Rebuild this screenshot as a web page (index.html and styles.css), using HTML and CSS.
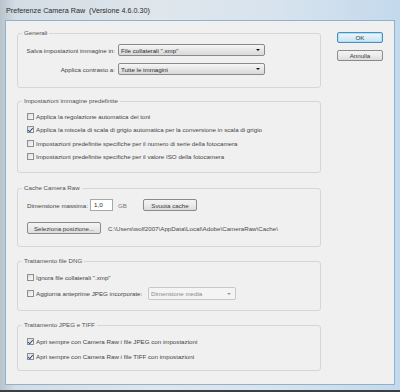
FILE: index.html
```html
<!DOCTYPE html>
<html lang="it">
<head>
    <meta charset="UTF-8">
    <title>Preferenze Camera Raw</title>
    <link rel="stylesheet" href="styles.css">
</head>
<body>
    <div class="window">
        <div class="titlebar">Preferenze Camera Raw&nbsp; (Versione 4.6.0.30)</div>
        <div class="client">
            <div class="groups">
                <fieldset class="group general">
                    <legend>Generali</legend>
                    <div class="form-grid">
                        <span class="field-label">Salva impostazioni immagine in:</span>
                        <div class="combo"><span>File collaterali ".xmp"</span><i class="arrow"></i></div>
                        <span class="field-label">Applica contrasto a:</span>
                        <div class="combo"><span>Tutte le immagini</span><i class="arrow"></i></div>
                    </div>
                </fieldset>

                <fieldset class="group defaults">
                    <legend>Impostazioni immagine predefinite</legend>
                    <div class="check-list">
                        <label class="check"><span class="box"></span>Applica la regolazione automatica dei toni</label>
                        <label class="check"><span class="box checked"></span>Applica la miscela di scala di grigio automatica per la conversione in scala di grigio</label>
                        <label class="check"><span class="box"></span>Impostazioni predefinite specifiche per il numero di serie della fotocamera</label>
                        <label class="check"><span class="box"></span>Impostazioni predefinite specifiche per il valore ISO della fotocamera</label>
                    </div>
                </fieldset>

                <fieldset class="group cache">
                    <legend>Cache Camera Raw</legend>
                    <div class="cache-row">
                        <span class="size-label">Dimensione massima:</span>
                        <div class="textbox">1,0</div>
                        <span class="unit">GB</span>
                        <button class="btn purge">Svuota cache</button>
                    </div>
                    <div class="cache-row location">
                        <button class="btn choose">Seleziona posizione...</button>
                        <span class="path">C:\Users\wolf2007\AppData\Local\Adobe\CameraRaw\Cache\</span>
                    </div>
                </fieldset>

                <fieldset class="group dng">
                    <legend>Trattamento file DNG</legend>
                    <div class="check-list">
                        <label class="check"><span class="box"></span>Ignora file collaterali ".xmp"</label>
                        <div class="preview-row">
                            <label class="check preview-label"><span class="box"></span>Aggiorna anteprime JPEG incorporate:</label>
                            <div class="combo disabled"><span>Dimensione media</span><i class="arrow"></i></div>
                        </div>
                    </div>
                </fieldset>

                <fieldset class="group jpeg">
                    <legend>Trattamento JPEG e TIFF</legend>
                    <div class="check-list">
                        <label class="check"><span class="box checked"></span>Apri sempre con Camera Raw i file JPEG con impostazioni</label>
                        <label class="check"><span class="box checked"></span>Apri sempre con Camera Raw i file TIFF con impostazioni</label>
                    </div>
                </fieldset>
            </div>

            <div class="buttons">
                <button class="btn dialog default">OK</button>
                <button class="btn dialog">Annulla</button>
            </div>
        </div>
    </div>
</body>
</html>
```

FILE: styles.css
```css
body {
    margin: 0;
    padding: 0;
    font-family: 'Liberation Sans', Arial, sans-serif;
    color: #444;
    background: #fff;
}

.window {
    width: 400px;
    height: 392px;
    box-sizing: border-box;
    background: linear-gradient(90deg, #b8c3cc 0%, #d3dde5 4%, #dfe6ec 40%, #d7e3ee 70%, #c3d9ec 100%);
    border-bottom: 2px solid #3a3f44;
    display: flex;
    flex-direction: column;
}

.titlebar {
    height: 20px;
    padding-left: 6px;
    font-size: 7.2px;
    line-height: 21px;
    color: #2a2a2a;
    flex-shrink: 0;
}

.client {
    margin: 0 5px 5px 5px;
    flex: 1;
    background: #f0f0f0;
    border: 1px solid #8eb2cc;
    padding: 8px 0 0 11px;
    display: flex;
    gap: 16px;
}

.groups {
    width: 304px;
    display: flex;
    flex-direction: column;
}

.group {
    margin: 0;
    padding: 0 12px 0 9px;
    border: 1px solid #d6d6d6;
    border-radius: 3px;
    box-sizing: border-box;
    min-width: 0;
    font-size: 6.2px;
}

.group legend {
    font-size: 6.2px;
    line-height: 8px;
    padding: 0 2px;
    margin-left: -5px;
    color: #505050;
}

.general { height: 59px; padding-top: 7px; }
.defaults { height: 76px; margin-top: 9px; padding-top: 6px; }
.cache { height: 63px; margin-top: 11px; padding-top: 7px; }
.dng { height: 54px; margin-top: 10px; padding-top: 7px; }
.jpeg { height: 50px; margin-top: 10px; padding-top: 7px; }

.form-grid {
    display: grid;
    grid-template-columns: 88px 147px;
    grid-auto-rows: 12px;
    column-gap: 3px;
    row-gap: 7px;
    align-items: center;
}

.field-label {
    justify-self: end;
    white-space: nowrap;
}

.combo {
    height: 12px;
    box-sizing: border-box;
    border: 1px solid #8a8a8a;
    border-radius: 2px;
    background: linear-gradient(#f6f6f6, #e6e6e6 50%, #d9d9d9);
    display: flex;
    align-items: center;
    padding-left: 2px;
    color: #2a2a2a;
}

.combo span {
    flex: 1;
    white-space: nowrap;
}

.combo .arrow {
    width: 0;
    height: 0;
    margin-right: 4px;
    border-left: 2px solid transparent;
    border-right: 2px solid transparent;
    border-top: 2px solid #111;
}

.combo.disabled {
    width: 88px;
    height: 13px;
    background: #f4f4f4;
    border-color: #c8c8c8;
    color: #8a8a8a;
}

.combo.disabled .arrow {
    border-top-color: #9a9a9a;
}

.check-list {
    display: flex;
    flex-direction: column;
    gap: 3.6px;
}

.dng .check-list,
.jpeg .check-list {
    gap: 5px;
}

.check {
    height: 10px;
    display: flex;
    align-items: center;
    gap: 2px;
    white-space: nowrap;
}

.box {
    width: 7px;
    height: 7px;
    box-sizing: border-box;
    border: 1px solid #8f8f8f;
    background: linear-gradient(135deg, #dcdcdc, #fbfbfb);
    flex-shrink: 0;
    position: relative;
}

.box.checked::after {
    content: '';
    position: absolute;
    left: 1px;
    top: 0;
    width: 2px;
    height: 3.5px;
    border-right: 1.3px solid #2b4f9a;
    border-bottom: 1.3px solid #2b4f9a;
    transform: rotate(40deg);
}

.preview-row {
    display: flex;
    align-items: center;
    height: 13px;
}

.preview-label {
    width: 121px;
}

.cache-row {
    display: flex;
    align-items: center;
    height: 12px;
    white-space: nowrap;
}

.cache-row.location {
    margin-top: 11px;
}

.size-label {
    width: 63px;
}

.textbox {
    width: 23px;
    height: 12px;
    box-sizing: border-box;
    border: 1px solid #a8a8a8;
    background: #fff;
    padding-left: 3px;
    line-height: 10px;
    color: #2a2a2a;
}

.unit {
    width: 25px;
    margin-left: 5px;
    color: #777;
}

.btn {
    font-family: inherit;
    font-size: 6.2px;
    color: #3a3a3a;
    height: 12px;
    padding: 0;
    box-sizing: border-box;
    border: 1px solid #8a8a8a;
    border-radius: 2px;
    background: linear-gradient(#f4f4f4, #ebebeb 50%, #dcdcdc);
}

.purge { width: 54px; }
.choose { width: 74px; }

.path {
    margin-left: 7px;
    color: #4a4a4a;
}

.buttons {
    padding-top: 3px;
    display: flex;
    flex-direction: column;
    gap: 7px;
}

.btn.dialog {
    width: 46px;
    height: 11px;
}

.btn.default {
    border-color: #4a8fbf;
    background: linear-gradient(#eef7fc, #dcedf8 50%, #c6e2f3);
    box-shadow: inset 0 0 0 1px #aee0f7;
}
```
